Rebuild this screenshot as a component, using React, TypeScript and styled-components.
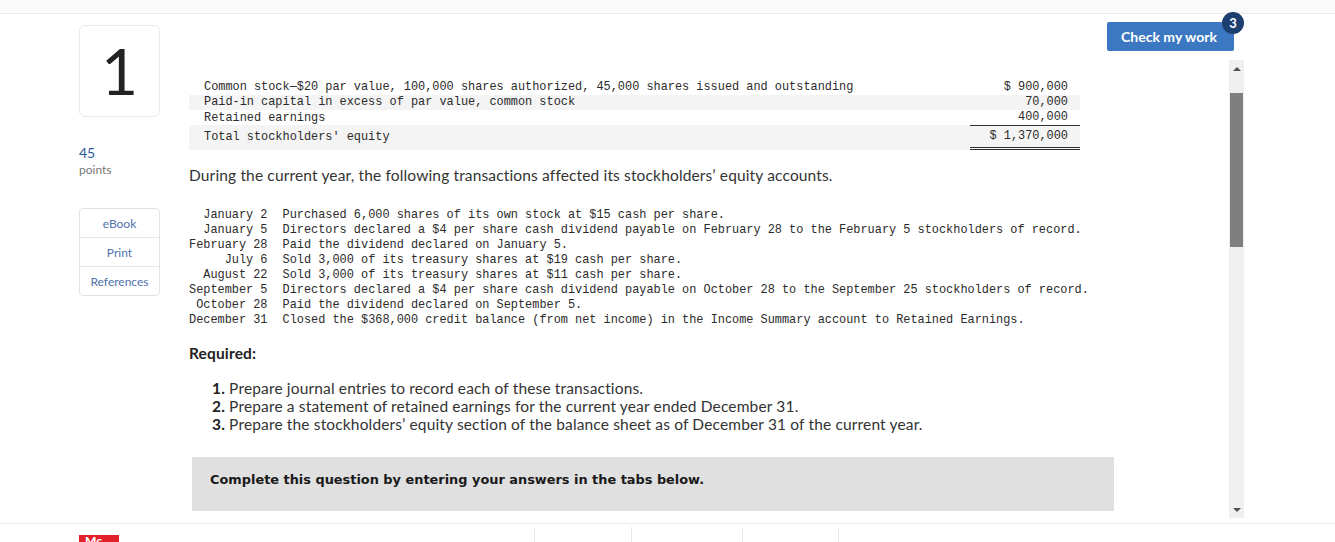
import React from "react";
import styled, { createGlobalStyle } from "styled-components";

const GlobalStyle = createGlobalStyle`
  html, body { margin: 0; padding: 0; background: #ffffff; }
  body { font-family: Lato, "Open Sans", Arial, sans-serif; color: #333333; }
  * { box-sizing: border-box; }
`;

const Page = styled.div`
  width: 1335px;
  height: 542px;
  overflow: hidden;
  display: flex;
  flex-direction: column;
`;

const TopStrip = styled.div`
  height: 14px;
  flex: none;
  background: #fafafa;
  border-bottom: 1px solid #ececec;
`;

const Body = styled.div`
  height: 509px;
  flex: none;
  display: flex;
`;

const LeftCol = styled.div`
  margin-left: 79px;
  width: 81px;
  padding-top: 11px;
  display: flex;
  flex-direction: column;
`;

const QuestionBox = styled.div`
  height: 92px;
  border: 1px solid #e9e9e9;
  border-radius: 6px;
  display: flex;
  align-items: center;
  justify-content: center;
  font-size: 64px;
  line-height: 1;
  color: #222222;
  font-weight: 400;
`;

const Points = styled.div`
  margin-top: 28px;
  display: flex;
  flex-direction: column;
  gap: 2px;
`;

const PointsValue = styled.span`
  font-size: 14px;
  line-height: 16px;
  color: #2d5b94;
`;

const PointsLabel = styled.span`
  font-size: 12px;
  line-height: 14px;
  color: #777777;
`;

const SideMenu = styled.div`
  margin-top: 31px;
  border: 1px solid #e3e3e3;
  border-radius: 4px;
  display: flex;
  flex-direction: column;
`;

const SideItem = styled.div`
  height: 29px;
  display: flex;
  align-items: center;
  justify-content: center;
  font-size: 12px;
  color: #4f72ac;
  border-bottom: 1px solid #e6e6e6;
  &:last-child { border-bottom: none; height: 28px; }
`;

const MainCol = styled.div`
  margin-left: 29px;
  width: 1055px;
  display: flex;
  flex-direction: column;
`;

const TopBar = styled.div`
  height: 46px;
  padding: 8px 10px 0 0;
  display: flex;
  justify-content: flex-end;
  align-items: flex-start;
`;

const CheckButton = styled.div`
  position: relative;
  width: 127px;
  height: 29px;
  background: #3b78c1;
  border-radius: 2px;
  color: #ffffff;
  font-weight: 700;
  font-size: 14px;
  display: flex;
  align-items: center;
  justify-content: center;
  padding-right: 3px;
`;

const Badge = styled.span`
  position: absolute;
  top: -10px;
  right: -10px;
  width: 22px;
  height: 22px;
  border-radius: 50%;
  background: #1c3f70;
  color: #ffffff;
  font-size: 13px;
  font-weight: 700;
  display: flex;
  align-items: center;
  justify-content: center;
`;

const ScrollRow = styled.div`
  height: 458px;
  display: flex;
`;

const Content = styled.div`
  flex: 1;
  padding-top: 20px;
  overflow: hidden;
`;

const Mono = `font-family: "Liberation Mono", "DejaVu Sans Mono", monospace; font-size: 11.9px; color: #2b2b2b;`;

const StockTable = styled.div`
  width: 891px;
  ${Mono}
`;

const StockRow = styled.div<{ $shaded?: boolean; $tall?: boolean }>`
  display: grid;
  grid-template-columns: 1fr 110px;
  background: ${(p) => (p.$shaded ? "#f4f4f4" : "transparent")};
  line-height: 15px;
  height: ${(p) => (p.$tall ? "25px" : "15px")};
  align-items: center;
`;

const StockLabel = styled.div`
  padding-left: 15px;
  white-space: pre;
`;

const StockAmount = styled.div<{ $rule?: "single" | "double" }>`
  align-self: stretch;
  display: flex;
  align-items: center;
  justify-content: flex-end;
  padding-right: 12px;
  white-space: pre;
  border-bottom: ${(p) =>
    p.$rule === "single" ? "1px solid #333" : p.$rule === "double" ? "3px double #333" : "none"};
`;

const Sans = `font-size: 15.5px; letter-spacing: 0.15px;`;

const Paragraph = styled.p`
  margin: 15px 0 0;
  ${Sans}
  line-height: 20px;
  color: #333333;
`;

const Transactions = styled.div`
  margin-top: 23px;
  display: grid;
  grid-template-columns: max-content 1fr;
  column-gap: 15px;
  line-height: 15px;
  ${Mono}
`;

const TxDate = styled.div`
  text-align: right;
  white-space: pre;
`;

const TxText = styled.div`
  white-space: pre;
`;

const RequiredTitle = styled.div`
  margin-top: 15px;
  ${Sans}
  line-height: 20px;
  font-weight: 700;
  color: #222222;
`;

const RequiredList = styled.ol`
  margin: 16px 0 0;
  padding-left: 23px;
  list-style: none;
  ${Sans}
  line-height: 18px;
  color: #333333;
`;

const RequiredItem = styled.li``;

const ItemNum = styled.b`
  font-weight: 700;
  color: #222;
`;

const Notice = styled.div`
  margin: 24px 0 0 3px;
  width: 922px;
  height: 54px;
  background: #e0e0e0;
  padding: 14px 18px 0;
  font-family: "DejaVu Sans", Verdana, sans-serif;
  font-weight: 700;
  font-size: 12.9px;
  line-height: 17px;
  color: #1a1a1a;
`;

const Scrollbar = styled.div`
  width: 15px;
  background: #f0f0f0;
  display: flex;
  flex-direction: column;
`;

const ArrowBtn = styled.div<{ $down?: boolean }>`
  height: 17px;
  flex: none;
  display: flex;
  align-items: center;
  justify-content: center;
  &::after {
    content: "";
    width: 0;
    height: 0;
    border-left: 4px solid transparent;
    border-right: 4px solid transparent;
    ${(p) => (p.$down ? "border-top: 4px solid #505050;" : "border-bottom: 4px solid #505050;")}
  }
`;

const Track = styled.div`
  flex: 1;
  padding: 0 1px;
`;

const Thumb = styled.div`
  height: 154px;
  background: #7f7f7f;
`;

const Footer = styled.div`
  flex: 1;
  border-top: 1px solid #ececec;
  display: flex;
  align-items: flex-start;
`;

const Logo = styled.div`
  margin: 11px 0 0 79px;
  width: 40px;
  height: 20px;
  background: #e2222b;
  color: #ffffff;
  font-weight: 900;
  font-size: 12px;
  line-height: 12px;
  padding-left: 6px;
`;

const FooterNav = styled.div`
  margin: 3px 0 0 415px;
  display: flex;
`;

const FooterCell = styled.div<{ $w: number }>`
  width: ${(p) => p.$w}px;
  height: 20px;
  border-left: 1px solid #e8e8e8;
  &:last-child { border-right: 1px solid #e8e8e8; }
`;

const stock = [
  { label: "Common stock\u2014$20 par value, 100,000 shares authorized, 45,000 shares issued and outstanding", amount: "$ 900,000" },
  { label: "Paid-in capital in excess of par value, common stock", amount: "70,000", shaded: true },
  { label: "Retained earnings", amount: "400,000", rule: "single" as const },
  { label: "Total stockholders' equity", amount: "$ 1,370,000", shaded: true, tall: true, rule: "double" as const },
];

const txs = [
  ["January 2", "Purchased 6,000 shares of its own stock at $15 cash per share."],
  ["January 5", "Directors declared a $4 per share cash dividend payable on February 28 to the February 5 stockholders of record."],
  ["February 28", "Paid the dividend declared on January 5."],
  ["July 6", "Sold 3,000 of its treasury shares at $19 cash per share."],
  ["August 22", "Sold 3,000 of its treasury shares at $11 cash per share."],
  ["September 5", "Directors declared a $4 per share cash dividend payable on October 28 to the September 25 stockholders of record."],
  ["October 28", "Paid the dividend declared on September 5."],
  ["December 31", "Closed the $368,000 credit balance (from net income) in the Income Summary account to Retained Earnings."],
];

const required = [
  "Prepare journal entries to record each of these transactions.",
  "Prepare a statement of retained earnings for the current year ended December 31.",
  "Prepare the stockholders\u2019 equity section of the balance sheet as of December 31 of the current year.",
];

export default function App() {
  return (
    <Page>
      <GlobalStyle />
      <TopStrip />
      <Body>
        <LeftCol>
          <QuestionBox>1</QuestionBox>
          <Points>
            <PointsValue>45</PointsValue>
            <PointsLabel>points</PointsLabel>
          </Points>
          <SideMenu>
            <SideItem>eBook</SideItem>
            <SideItem>Print</SideItem>
            <SideItem>References</SideItem>
          </SideMenu>
        </LeftCol>
        <MainCol>
          <TopBar>
            <CheckButton>
              Check my work
              <Badge>3</Badge>
            </CheckButton>
          </TopBar>
          <ScrollRow>
            <Content>
              <StockTable>
                {stock.map((r) => (
                  <StockRow key={r.label} $shaded={r.shaded} $tall={r.tall}>
                    <StockLabel>{r.label}</StockLabel>
                    <StockAmount $rule={r.rule}>{r.amount}</StockAmount>
                  </StockRow>
                ))}
              </StockTable>
              <Paragraph>
                During the current year, the following transactions affected its stockholders’ equity accounts.
              </Paragraph>
              <Transactions>
                {txs.map(([d, t]) => (
                  <React.Fragment key={d}>
                    <TxDate>{d}</TxDate>
                    <TxText>{t}</TxText>
                  </React.Fragment>
                ))}
              </Transactions>
              <RequiredTitle>Required:</RequiredTitle>
              <RequiredList>
                {required.map((r, i) => (
                  <RequiredItem key={i}>
                    <ItemNum>{i + 1}.</ItemNum> {r}
                  </RequiredItem>
                ))}
              </RequiredList>
              <Notice>Complete this question by entering your answers in the tabs below.</Notice>
            </Content>
            <Scrollbar>
              <ArrowBtn />
              <Track>
                <Thumb style={{ marginTop: 16 }} />
              </Track>
              <ArrowBtn $down />
            </Scrollbar>
          </ScrollRow>
        </MainCol>
      </Body>
      <Footer>
        <Logo>Mc</Logo>
        <FooterNav>
          <FooterCell $w={97} />
          <FooterCell $w={111} />
          <FooterCell $w={97} />
        </FooterNav>
      </Footer>
    </Page>
  );
}
